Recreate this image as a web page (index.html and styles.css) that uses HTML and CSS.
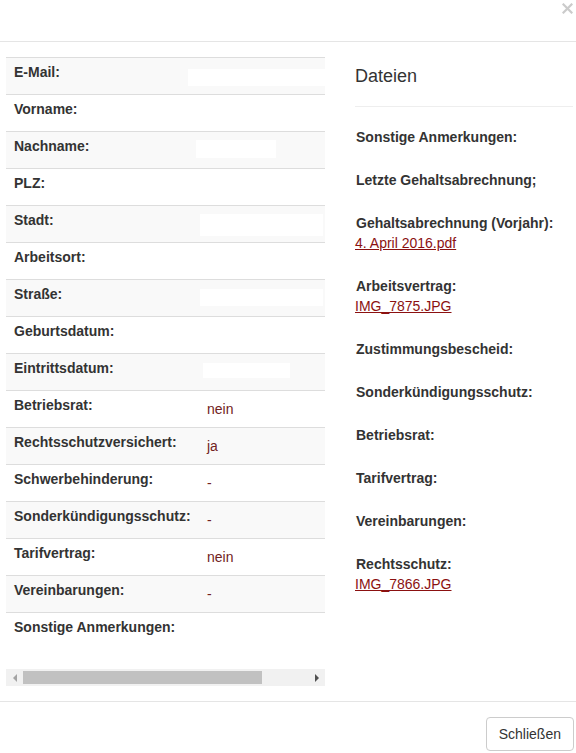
FILE: index.html
```html
<!DOCTYPE html>
<html lang="de">
<head>
<meta charset="utf-8">
<title>Details</title>
<link rel="stylesheet" href="styles.css">
</head>
<body>
<div class="modal">
  <div class="modal-header">
    <button class="close" type="button" aria-label="Schließen">
      <svg width="11" height="11" viewBox="0 0 11 11" aria-hidden="true"><path d="M1.5 1.5 L9.5 9.5 M9.5 1.5 L1.5 9.5" stroke="#000" stroke-width="2.2" stroke-linecap="square" fill="none"/></svg>
    </button>
  </div>
  <div class="modal-body">
    <div class="left">
      <div class="tablewrap">
        <table class="details">
          <colgroup><col class="c1"><col class="c2"></colgroup>
          <tbody>
            <tr><td class="lbl">E-Mail:</td><td><div class="val"><span class="redact r-email"></span></div></td></tr>
            <tr><td class="lbl">Vorname:</td><td><div class="val"></div></td></tr>
            <tr><td class="lbl">Nachname:</td><td><div class="val"><span class="redact r-nach"></span></div></td></tr>
            <tr><td class="lbl">PLZ:</td><td><div class="val"></div></td></tr>
            <tr><td class="lbl">Stadt:</td><td><div class="val"><span class="redact r-stadt"></span></div></td></tr>
            <tr><td class="lbl">Arbeitsort:</td><td><div class="val"></div></td></tr>
            <tr><td class="lbl">Straße:</td><td><div class="val"><span class="redact r-strasse"></span></div></td></tr>
            <tr><td class="lbl">Geburtsdatum:</td><td><div class="val"></div></td></tr>
            <tr><td class="lbl">Eintrittsdatum:</td><td><div class="val"><span class="redact r-eintritt"></span></div></td></tr>
            <tr><td class="lbl">Betriebsrat:</td><td><div class="val">nein</div></td></tr>
            <tr><td class="lbl">Rechtsschutzversichert:</td><td><div class="val">ja</div></td></tr>
            <tr><td class="lbl">Schwerbehinderung:</td><td><div class="val">-</div></td></tr>
            <tr><td class="lbl">Sonderkündigungsschutz:</td><td><div class="val">-</div></td></tr>
            <tr><td class="lbl">Tarifvertrag:</td><td><div class="val">nein</div></td></tr>
            <tr><td class="lbl">Vereinbarungen:</td><td><div class="val">-</div></td></tr>
            <tr class="last"><td class="lbl">Sonstige Anmerkungen:</td><td><div class="val tall"></div></td></tr>
          </tbody>
        </table>
      </div>
      <div class="hscroll">
        <div class="arrow arrow-left"></div>
        <div class="thumb"></div>
        <div class="track-rest"></div>
        <div class="arrow arrow-right"></div>
      </div>
    </div>
    <div class="right">
      <h4 class="title">Dateien</h4>
      <hr class="sep">
      <div class="item"><label>Sonstige Anmerkungen:</label></div>
      <div class="item"><label>Letzte Gehaltsabrechnung;</label></div>
      <div class="item"><label>Gehaltsabrechnung (Vorjahr):</label><a href="#">4. April 2016.pdf</a></div>
      <div class="item"><label>Arbeitsvertrag:</label><a href="#">IMG_7875.JPG</a></div>
      <div class="item"><label>Zustimmungsbescheid:</label></div>
      <div class="item"><label>Sonderkündigungsschutz:</label></div>
      <div class="item"><label>Betriebsrat:</label></div>
      <div class="item"><label>Tarifvertrag:</label></div>
      <div class="item"><label>Vereinbarungen:</label></div>
      <div class="item"><label>Rechtsschutz:</label><a href="#">IMG_7866.JPG</a></div>
    </div>
  </div>
  <div class="modal-footer">
    <button class="btn" type="button">Schließen</button>
  </div>
</div>
</body>
</html>
```
FILE: styles.css
```css
* { box-sizing: border-box; }
html, body {
  margin: 0;
  padding: 0;
  background: #fff;
}
body {
  font-family: "Liberation Sans", Arial, Helvetica, sans-serif;
  font-size: 14px;
  line-height: 20px;
  color: #333;
  overflow: hidden;
}
.modal { width: 576px; }

.modal-header {
  height: 42px;
  border-bottom: 1px solid #e5e5e5;
  display: flex;
  justify-content: flex-end;
  align-items: flex-start;
  padding: 3px 3px 0 0;
}
.close {
  border: 0;
  background: transparent;
  padding: 0;
  margin: 0;
  width: 11px;
  height: 11px;
  line-height: 0;
  opacity: .2;
  cursor: pointer;
}
.close svg { display: block; }

.modal-body {
  height: 659px;
  display: flex;
  align-items: flex-start;
  padding: 15px 0 0 6px;
}
.left { width: 319px; flex: none; }
.tablewrap { width: 319px; overflow: hidden; }
.details {
  width: 383px;
  table-layout: fixed;
  border-collapse: separate;
  border-spacing: 0;
}
.details col.c1 { width: 193px; }
.details col.c2 { width: 190px; }
.details td {
  border-top: 1px solid #ddd;
  padding: 8px;
  vertical-align: top;
  color: #722222;
}
.details td.lbl {
  padding: 4px 8px 0;
  font-weight: bold;
  color: #333;
  white-space: nowrap;
}
.details tr:nth-child(odd) td { background: #f9f9f9; }
.val { display: flow-root; height: 20px; white-space: nowrap; }
.val.tall { height: 40px; }

.redact { display: block; background: #fff; }
.r-email { margin: 3px 0 0 -19px; width: 200px; height: 17px; }
.r-nach { margin: 0 0 0 -11px; width: 80px; height: 18px; }
.r-stadt { margin: 0 0 0 -7px; width: 123px; height: 22px; }
.r-strasse { margin: 1px 0 0 -7px; width: 123px; height: 17px; }
.r-eintritt { margin: 1px 0 0 -4px; width: 87px; height: 15px; }

.hscroll {
  height: 17px;
  background: #f1f1f1;
  display: flex;
  align-items: center;
}
.arrow {
  width: 17px;
  height: 17px;
  flex: none;
  display: flex;
  align-items: center;
  justify-content: center;
}
.arrow-left::before {
  content: "";
  border-style: solid;
  border-width: 4px 4px 4px 0;
  border-color: transparent #a3a3a3 transparent transparent;
}
.arrow-right::before {
  content: "";
  border-style: solid;
  border-width: 4px 0 4px 4px;
  border-color: transparent transparent transparent #505050;
}
.thumb {
  width: 239px;
  height: 13px;
  background: #c1c1c1;
  flex: none;
}
.track-rest { flex: 1; }

.right {
  width: 218px;
  margin-left: 30px;
  flex: none;
}
.title {
  margin: 10px 0 0;
  font-size: 18px;
  font-weight: normal;
  line-height: 19px;
  color: #333;
}
.sep {
  margin: 20px 0 20px;
  border: 0;
  border-top: 1px solid #eee;
  height: 0;
}
.item { margin-bottom: 23px; }
.item label {
  display: block;
  font-weight: bold;
  padding-left: 1px;
}
.item a {
  display: block;
  color: #8b1111;
  text-decoration: underline;
  width: max-content;
}

.modal-footer {
  border-top: 1px solid #e5e5e5;
  padding: 15px 2px 15px 15px;
  display: flex;
  justify-content: flex-end;
}
.btn {
  font-family: "Liberation Sans", Arial, sans-serif;
  font-size: 14px;
  line-height: 20px;
  padding: 6px 12px;
  color: #333;
  background: #fff;
  border: 1px solid #ccc;
  border-radius: 4px;
  cursor: pointer;
}
```
